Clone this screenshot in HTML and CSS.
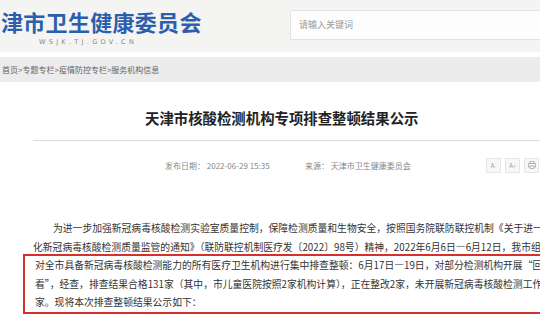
FILE: index.html
```html
<!DOCTYPE html>
<html lang="zh-CN">
<head>
  <meta charset="UTF-8">
  <meta name="viewport" content="width=device-width, initial-scale=1.0">
  <title>天津市核酸检测机构专项排查整顿结果公示</title>
  <link rel="stylesheet" href="styles.css">
</head>
<body>
  <div class="top">
    <div class="brand">
      <div class="brand-name">津市卫生健康委员会</div>
      <div class="brand-url">WSJK.TJ.GOV.CN</div>
    </div>
    <div class="search">请输入关键词</div>
  </div>

  <div class="crumbs">首页&gt;专题专栏&gt;疫情防控专栏&gt;服务机构信息</div>

  <h1 class="article-title">天津市核酸检测机构专项排查整顿结果公示</h1>
  <div class="rule"></div>

  <div class="meta">
    <span class="date">发布日期： 2022-06-29 15:35</span>
    <span class="source">来源： 天津市卫生健康委员会</span>
    <div class="tools">
      <span class="tool">A<sup>-</sup></span>
      <span class="tool">A<sup>+</sup></span>
      <span class="tool">
        <svg width="8" height="8" viewBox="0 0 8 8"><rect x="2" y="0.5" width="4" height="2" fill="none" stroke="#aaa" stroke-width="0.8"/><rect x="0.5" y="2.5" width="7" height="3.5" fill="none" stroke="#aaa" stroke-width="0.8"/><rect x="2" y="5" width="4" height="2.5" fill="#f7f7f7" stroke="#aaa" stroke-width="0.8"/></svg>
      </span>
    </div>
  </div>

  <div class="content">
    <div class="line indent">为进一步加强新冠病毒核酸检测实验室质量控制，保障检测质量和生物安全，按照国务院联防联控机制《关于进一步强</div>
    <div class="line">化新冠病毒核酸检测质量监管的通知》（联防联控机制医疗发〔2022〕98号）精神，2022年6月6日—6月12日，我市组织</div>
    <div class="mark">
      <div class="line">对全市具备新冠病毒核酸检测能力的所有医疗卫生机构进行集中排查整顿：6月17日—19日，对部分检测机构开展“回头</div>
      <div class="line">看”，经查，排查结果合格131家（其中，市儿童医院按照2家机构计算），正在整改2家，未开展新冠病毒核酸检测工作2</div>
      <div class="line">家。现将本次排查整顿结果公示如下：</div>
    </div>
  </div>
</body>
</html>
```

FILE: styles.css
```css
html, body {
  margin: 0;
  width: 540px;
  height: 320px;
  overflow: hidden;
  background: #fff;
  font-family: "Noto Sans CJK SC", "Noto Sans", sans-serif;
}
.top {
  display: flex;
  height: 52px;
  background: #f4f4f2;
}
.brand {
  width: 289px;
  padding: 8px 0 0 1px;
}
.brand-name {
  font-size: 22px;
  line-height: 26px;
  font-weight: bold;
  color: #2c5eae;
  letter-spacing: 0.3px;
  white-space: nowrap;
}
.brand-url {
  margin: 4px 0 0 38px;
  font-family: "DejaVu Sans", sans-serif;
  font-size: 6.5px;
  letter-spacing: 3.3px;
  color: #888;
}
.search {
  flex: 1;
  margin-top: 10px;
  height: 28px;
  line-height: 28px;
  padding-left: 8px;
  border: 1px solid #e3e3e3;
  border-right: none;
  background: #fdfdfd;
  font-size: 9px;
  color: #999;
}
.crumbs {
  margin-top: 5px;
  height: 25px;
  line-height: 25px;
  padding-left: 2px;
  background: #ececec;
  font-size: 8px;
  color: #666;
  white-space: nowrap;
}
.article-title {
  margin: 26px 0 0 145px;
  font-size: 14.4px;
  line-height: 20px;
  font-weight: bold;
  color: #222;
  white-space: nowrap;
}
.rule {
  margin: 12px 0 0 33px;
  border-top: 1px solid #dcdcdc;
}
.meta {
  display: flex;
  align-items: center;
  height: 14px;
  margin-top: 17px;
  padding-left: 165px;
  font-size: 8px;
  color: #888;
  white-space: nowrap;
}
.date {
  width: 140px;
}
.tools {
  display: flex;
  gap: 4px;
  margin-left: auto;
  margin-right: 1px;
}
.tool {
  display: flex;
  align-items: center;
  justify-content: center;
  width: 13px;
  height: 13px;
  border: 1px solid #e6e6e6;
  background: #f7f7f7;
  font-size: 6px;
  color: #999;
}
.tool sup {
  font-size: 5px;
}
.content {
  margin-top: 47px;
  font-size: 9.8px;
  line-height: 18.5px;
  color: #333;
}
.line {
  padding-left: 33px;
  white-space: nowrap;
}
.line.indent {
  padding-left: 53px;
}
.mark {
  margin: -2px 0 0 23px;
  padding-left: 10px;
  border: 2px solid #d5302b;
  border-right: none;
}
.mark .line {
  padding-left: 0;
}
```
